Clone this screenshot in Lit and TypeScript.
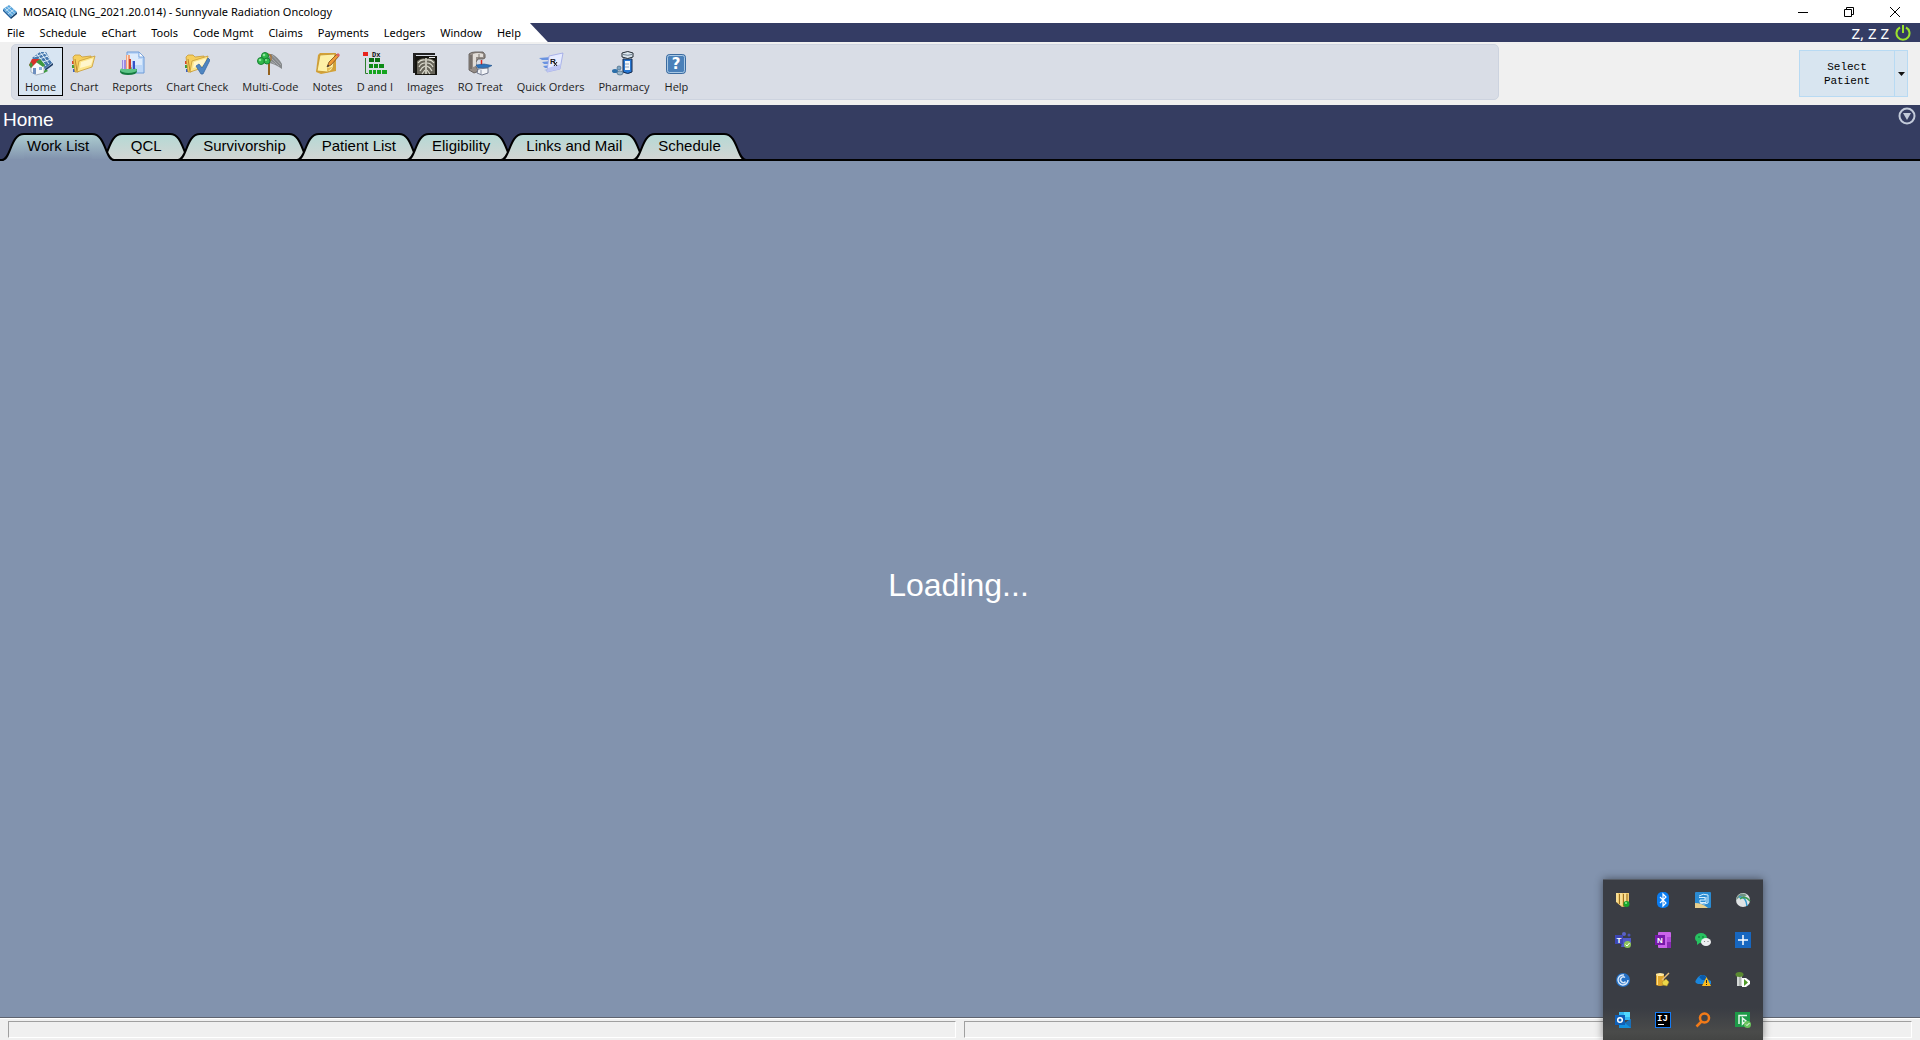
import { LitElement, html, svg, css, SVGTemplateResult } from "lit";
import { customElement, property } from "lit/decorators.js";

const cube = svg`
  <path d="M0 5 L6 1 L14 8 L8 13Z" fill="#5aa5dc"/>
  <path d="M0 5 L8 13 V15 L0 7Z" fill="#1f5f9c"/><path d="M8 13 L14 8 V10 L8 15Z" fill="#163f6b"/>
  <path d="M2 4 L10 11.500 M4 2.500 L12 9.500 M2.500 7 L8 3 M5 10 L11 5.500" stroke="#d4ebfa" stroke-width=".8" fill="none"/>`;

const folder = svg`
  <rect x="1" y="10" width="3" height="3" fill="#d8452c"/><rect x="1" y="14" width="3" height="3" fill="#3a9b3d"/><rect x="2" y="18" width="3" height="3" fill="#3a62c4"/>
  <path d="M2 6 L4 4 L9 4 L11 6 L20 5 L21 9 L7 21 L4 21Z" fill="#f6cf5e" stroke="#c99a35" stroke-width=".8"/>
  <path d="M4 8 L6 20" stroke="#b98a30" stroke-width="1"/>
  <path d="M8 10 L24 5 L21 16 L6 21Z" fill="#fde68c" stroke="#c99a35" stroke-width=".8"/>
  <path d="M10 11 L22 7.500 L20 14 L9 17Z" fill="#fff6cc"/>`;

const icons: Record<string, SVGTemplateResult> = {
  home: svg`
    <path d="M4 7 L12 1 L18 1 L24 12 L17 18Z" fill="#4577ad"/>
    <path d="M9 3 L18 15 M12 1 L21 13 M16 1 L24 11 M6 6 L18 2 M8 9 L20 5 M12 12 L22 8.500" stroke="#dcecf8" stroke-width="1"/>
    <path d="M17 18 L25 12 V14 L17 20Z" fill="#1e3c66"/>
    <path d="M3 15 L8 9 L16 13 V22 L8 24 L3 21Z" fill="#f7f9fb" stroke="#8b98a8" stroke-width=".7"/>
    <path d="M1 14 L4 8 L12 8 L9 11 L3 17Z" fill="#d8322a"/><path d="M1 14 L3 11 L5 14 L3 17Z" fill="#3f9a3f"/>
    <path d="M8 11 L12 8 L17 14 L15 16Z" fill="#3f9a3f"/>
    <rect x="5" y="17" width="3" height="6" fill="#6f90c0"/><rect x="11" y="16" width="3" height="3" fill="#8bb0dd"/>
    <path d="M16 20 q2-3 4 0 l-4 2Z" fill="#3f9a3f"/>`,
  chart: folder,
  reports: svg`
    <path d="M8 1 H20 L25 6 V22 H8Z" fill="#bcd7f8" stroke="#6f9cd8"/><path d="M10 3 H19 V8 H23 V14 H10Z" fill="#dcebfc"/>
    <path d="M20 1 V6 H25Z" fill="#fff" stroke="#6f9cd8" stroke-width=".8"/>
    <path d="M1 19 V21 Q2 24 9 24 Q18 24 18 20 V18Z" fill="#157a40"/><ellipse cx="9.500" cy="19" rx="8.500" ry="3" fill="#5cc486"/>
    <rect x="3" y="9" width="4" height="9" fill="#9c8ae0"/><rect x="4" y="9" width="1" height="9" fill="#d8d0ff"/>
    <rect x="7" y="4" width="4" height="14" fill="#f3a27a"/><rect x="8" y="4" width="1" height="14" fill="#ffe0cc"/><rect x="10" y="8" width="2" height="10" fill="#cf3f2c"/>
    <rect x="13" y="10" width="3" height="8" fill="#3453c8"/><rect x="13" y="10" width="1" height="8" fill="#9fb4f4"/>`,
  check: svg`${folder}<path d="M12 15 L15 13 L18 17 L24 7 L26 9 L19 23 L17 23Z" fill="#4f86c2" stroke="#3a6aa4" stroke-width=".8"/>`,
  multi: svg`
    <path d="M11 3 H15 Q21 6 25 13 V18 Q18 13 12 12Z" fill="#85888b"/><path d="M12 5 L22 15 M15 4 L24 14 M12 9 L18 13" stroke="#b4b7ba" stroke-width=".7" fill="none"/>
    <path d="M12 10 V24" stroke="#94621f" stroke-width="2"/><path d="M10 3 Q15 3 14 8 Q13 11 10 11" stroke="#a9753a" fill="none" stroke-width="1.500"/>
    <circle cx="8" cy="5" r="3.500" fill="#2fb84a" stroke="#178232"/><circle cx="4" cy="10" r="3.500" fill="#2fb84a" stroke="#178232"/><circle cx="10" cy="10" r="3" fill="#2fb84a" stroke="#178232"/>
    <circle cx="7" cy="4" r="1.300" fill="#8ce89a"/><circle cx="3" cy="9" r="1.300" fill="#8ce89a"/><circle cx="9" cy="9" r="1" fill="#8ce89a"/>`,
  notes: svg`
    <path d="M3 4 L5 2 L21 2 L21 20 L6 23 L1 21Z" fill="#d3a137"/>
    <path d="M5 4 L20 3 L18 17 Q16 21 12 21 L2 20Z" fill="#fdf0a6" stroke="#c3922c" stroke-width=".8"/>
    <path d="M18 16 L12 21 L12 17Z" fill="#e3bd55"/>
    <path d="M12 16 L14 11 L22 3 L24 5 L16 14Z" fill="#ef9a35" stroke="#7b4a1c" stroke-width=".8"/>
    <path d="M21 4 L23 2 L25 4 L23.500 6Z" fill="#dc6466"/><path d="M12 16 L13 13.500 L14.500 15Z" fill="#333"/>`,
  dx: svg`
    <rect x="1" y="1" width="5" height="4" fill="#e8221c"/><path d="M3.500 7 V22.500 H6" stroke="#2d7d2d" fill="none"/>
    <rect x="7" y="7" width="5" height="4" fill="#0b6d12"/><rect x="13" y="7" width="5" height="4" fill="#0b6d12"/>
    <rect x="7" y="13" width="4" height="4" fill="#0d8a16"/><rect x="12" y="13" width="4" height="4" fill="#0d8a16"/><rect x="17" y="13" width="5" height="4" fill="#0d8a16"/>
    <rect x="7" y="19" width="3" height="4" fill="#16a51f"/><rect x="11" y="19" width="3" height="4" fill="#16a51f"/><rect x="15" y="19" width="4" height="4" fill="#16a51f"/><rect x="20" y="19" width="5" height="4" fill="#16a51f"/>
    <text x="10" y="6" font-size="7" font-family="Liberation Mono, monospace" font-weight="bold" fill="#111">Dx</text>`,
  images: svg`
    <path d="M1 2 H23 V4 H4 V22 H1Z" fill="#222"/><rect x="3" y="5" width="22" height="19" fill="#15140f"/>
    <path d="M5 10 Q10 6 14 8 Q18 6 23 10 V23 H5Z" fill="#68655a"/>
    <path d="M14 7 V23" stroke="#e6e5d8" stroke-width="1.500"/>
    <path d="M13 9 Q9 8 6 12 M13 12 Q9 12 7 16 M13 15 Q10 16 8 20 M13 19 L10 23 M15 9 Q19 8 22 12 M15 12 Q19 12 21 16 M15 15 Q18 16 20 20 M15 19 L18 23" stroke="#dddccf" stroke-width="1.200" fill="none"/>
    <rect x="17" y="6" width="6" height="1" fill="#eee"/>`,
  treat: svg`
    <path d="M2 3 Q4 1 8 1 L16 1 Q19 3 18 7 L16 8 L11 8 L9 11 V16 L12 20 L7 22 L2 19Z" fill="#958d88" stroke="#57514d" stroke-width=".8"/>
    <path d="M6 3 Q11 1 16 3 V6 H9 V15 L6 16Z" fill="#e2ddd8"/><path d="M4 4 V18" stroke="#6e6763" stroke-width="1.500"/><path d="M12 3 V8" stroke="#7d7671"/>
    <path d="M14.500 9 V14" stroke="#e3261c" stroke-width="1.500"/>
    <path d="M9 14 L17 13 L25 14.500 L21 16.500 L11 17Z" fill="#2e74bd" stroke="#1c4d84" stroke-width=".6"/>
    <path d="M11 18 L21 17 V22 L15 24 L10 22Z" fill="#f2f4f8" stroke="#59627a" stroke-width=".8"/><path d="M14 19 V23" stroke="#8b94a8"/>`,
  orders: svg`
    <path d="M1 7 L13 6 V9 L4 9Z M4 11 L13 10 V13 L6 13Z M5 15 L13 14 V17 L7 17Z M6 19 L13 18 V20Z" fill="#6a93e0"/>
    <path d="M11 5 L25 2 L22 18 L9 21Z" fill="#e6ebff" stroke="#9aa4e4" stroke-width=".8"/><path d="M9 21 L22 18 L23 13 L10 17Z" fill="#bdc5f4"/>
    <text x="12" y="13" font-size="8" font-weight="bold" font-family="Liberation Sans, sans-serif" fill="#16161c">R</text><path d="M16 11 L19 15 M19 11 L16 15" stroke="#16161c" stroke-width="1"/>`,
  pharmacy: svg`
    <path d="M12 8 H21 V21 Q17 24 12 21Z" fill="#2878d4" stroke="#16294a"/><rect x="14" y="10" width="5" height="9" fill="#f3f7fb"/><path d="M14 13 H18 M14 16 H18" stroke="#95a5b8"/>
    <path d="M11 2 Q17 -1 22 2 V6 Q17 9 11 6Z" fill="#dce6ee" stroke="#222b33"/><path d="M12 3.500 Q17 5 21 3.500" stroke="#6c7f90" fill="none"/>
    <ellipse cx="4" cy="20" rx="3" ry="2" fill="#2c6ea8"/><circle cx="8" cy="17" r="2" fill="#7fa6c4" stroke="#375a77" stroke-width=".6"/><ellipse cx="9" cy="22" rx="3" ry="2" fill="#9bb9cf" stroke="#375a77" stroke-width=".6"/>`,
  help: svg`
    <rect x="3.500" y="3.500" width="19" height="19" rx="3" fill="#4a80b9" stroke="#3a6a9f"/><rect x="4.500" y="4.500" width="17" height="17" rx="2" fill="none" stroke="#a9c8e4"/>
    <text x="13" y="18" text-anchor="middle" font-size="15" font-weight="bold" font-family="DejaVu Sans, sans-serif" fill="#fff">?</text>`,
};

const trayIcons: { name: string; art: SVGTemplateResult }[] = [
  { name: "Shield", art: svg`<path d="M1 1 H14 V9 L11 14 L7 15 L1 10Z" fill="#f0cb70"/><path d="M4.500 2 V12 M8.500 2 V14 M12 2 V10" stroke="#9c7020"/><path d="M2 1 V10 M6 1 V13 M10 1 V12" stroke="#fff0b8"/><circle cx="11.500" cy="12" r="3" fill="#18a52c"/><circle cx="11" cy="11" r="1" fill="#8dee94"/>` },
  { name: "Bluetooth", art: svg`<rect x="2" width="12" height="16" rx="5" fill="#0a7cf0"/><path d="M5 5 L11 11 L8 14 V2 L11 5 L5 11" stroke="#fff" fill="none" stroke-width="1.200"/>` },
  { name: "Graphics", art: svg`<rect width="16" height="16" rx="1" fill="#2a8bd2"/><path d="M0 11 Q7 11 13 16 H0Z" fill="#e7cf8d"/><path d="M4 4 Q8 1 13 3 V11 Q9 13 5 11 M4 5.500 H10 V8 H5 V10.500 H11 V5" stroke="#d6efff" fill="none"/>` },
  { name: "Network client", art: svg`<circle cx="8" cy="8" r="7" fill="#dfe3e5"/><path d="M2 5 Q6 -1 12 3 L9 5 Q4 4 1 9Z" fill="#6f9484"/><path d="M4 5 Q11 4 12 14" stroke="#2f9ad0" stroke-width="1.500" fill="none"/><path d="M5 7 Q10 3 15 9" stroke="#3f9c54" stroke-width="1.500" fill="none"/>` },
  { name: "Teams", art: svg`<circle cx="9" cy="2" r="2" fill="#5a62c8"/><circle cx="14" cy="3" r="1.500" fill="#4a52b8"/><path d="M8 6 H16 V11 L11 15 H6Z" fill="#5059c9"/><rect y="3" width="8" height="9" fill="#3d46b4"/><text x="4" y="10.500" text-anchor="middle" font-size="8" font-weight="bold" font-family="Liberation Sans, sans-serif" fill="#fff">T</text><circle cx="12.500" cy="12.500" r="3.500" fill="#8dc35a"/><path d="M10.500 12.500 L12 14 L14.500 11" stroke="#fff" fill="none"/>` },
  { name: "OneNote", art: svg`<rect x="3" width="13" height="16" rx="1" fill="#ca64ea"/><path d="M12 5 H16 V10 H12Z" fill="#ae4bd5"/><path d="M12 10 H16 V16 H12Z" fill="#8a2bb5"/><rect y="3" width="10" height="10" fill="#7719aa"/><text x="5" y="11" text-anchor="middle" font-size="8" font-weight="bold" font-family="Liberation Sans, sans-serif" fill="#fff">N</text>` },
  { name: "WeChat", art: svg`<ellipse cx="6" cy="6" rx="6" ry="5" fill="#27c160"/><path d="M2 9 L2 13 L6 10Z" fill="#27c160"/><circle cx="4" cy="5" r=".8" fill="#0a6a30"/><circle cx="8" cy="5" r=".8" fill="#0a6a30"/><ellipse cx="11" cy="10" rx="5" ry="4" fill="#eceef0"/><circle cx="9.500" cy="9.500" r=".6" fill="#777"/><circle cx="13" cy="9.500" r=".6" fill="#777"/>` },
  { name: "Add", art: svg`<rect width="16" height="16" fill="#1767c0"/><path d="M8 3 V13 M3 8 H13" stroke="#fff" stroke-width="1.500"/>` },
  { name: "Receiver", art: svg`<circle cx="8" cy="8" r="7" fill="#2470c4"/><path d="M9 3 A5 5 0 1 0 13 8 M10 5.500 A2.800 2.800 0 1 0 10.500 9.500" stroke="#d8e8fa" fill="none" stroke-width="1.500"/>` },
  { name: "Database", art: svg`<path d="M1 2 V13 Q5 15 9 13 V2Z" fill="#e0a62c"/><ellipse cx="5" cy="2.500" rx="4" ry="1.500" fill="#ffe9a0"/><path d="M2.500 4 V13" stroke="#ffe08a"/><path d="M7 8 L14 1" stroke="#e9c07a" stroke-width="1.500"/><path d="M7 10 L11 7 L14 10 L12 14 L8 13Z" fill="#ecd74a" stroke="#a78a1c" stroke-width=".5"/>` },
  { name: "OneDrive", art: svg`<path d="M3 12 Q-1 11 1 8 Q4 3 7 3 Q12 3 12 7 L16 9 V12 H4Z" fill="#1a86dc"/><path d="M4 5 Q8 1 11 5 L13 8 L7 8Z" fill="#0a5aa8"/><path d="M11.500 5 L16 14 H7Z" fill="#fbbc1d"/><path d="M11.500 8 V11 M11.500 12 V13" stroke="#222"/>` },
  { name: "Service monitor", art: svg`<path d="M2 3 H7 V14 H2Z" fill="#d4d8d6"/><path d="M5 4 V14" stroke="#8d9290"/><ellipse cx="4.500" cy="2.500" rx="4" ry="2.500" fill="#5b8a32"/><path d="M7 6 H11 L15 9 V12 L11 15 H7Z" fill="#fff"/><path d="M9 7 L13 10.500 L9 14Z" fill="#4e9a28"/>` },
  { name: "Outlook", art: svg`<path d="M4 0 H15 V8 H4Z" fill="#35b8f1"/><path d="M9 0 H15 V5 H9Z" fill="#50d9ff"/><path d="M4 7 L10 11 L16 7 V16 H4Z" fill="#1490df"/><path d="M10 11 L16 16 V7Z" fill="#1a6fb8"/><rect y="3" width="10" height="10" fill="#0f5fb8"/><circle cx="5" cy="8" r="2.300" stroke="#fff" stroke-width="1.500" fill="none"/>` },
  { name: "IntelliJ IDEA", art: svg`<rect x=".5" y=".5" width="15" height="15" fill="#000" stroke="#147bf5"/><text x="2" y="9" font-size="9" font-weight="bold" font-family="Liberation Mono, monospace" fill="#fff">IJ</text><path d="M3 12.500 H9" stroke="#fff"/>` },
  { name: "Search", art: svg`<circle cx="9.500" cy="6" r="4.500" stroke="#f27a18" stroke-width="2.500" fill="none"/><path d="M6.500 9.500 L1.500 14.500" stroke="#f27a18" stroke-width="2.500"/>` },
  { name: "Protected", art: svg`<rect width="15" height="15" fill="#1e9a48"/><path d="M4 12 V3.500 H12 M7.500 6 L11 9 L7.500 12Z" stroke="#e8f6ec" stroke-width="1.500" fill="none"/><circle cx="12.500" cy="12.500" r="3.500" fill="#69c25c"/><path d="M11 12.500 L12 13.500 L14.500 11" stroke="#fff" fill="none"/>` },
];

@customElement("folder-tab")
export class FolderTab extends LitElement {
  @property() label = "";
  @property({ type: Boolean, reflect: true }) active = false;

  static styles = css`
    :host { display: block; position: relative; margin-right: -14px; }
    :host([active]) { z-index: 1; }
    .tab {
      display: flex; align-items: stretch; height: 28px; padding: 0; border: 0; background: none;
      font: 15px/18px "Liberation Sans", Arial, sans-serif; color: #000;
    }
    .cap { display: block; width: 22px; height: 28px; flex: none; }
    .mid {
      box-sizing: border-box; min-width: 48px; padding: 2px 3px 0; text-align: center; white-space: nowrap;
      border-top: 2px solid #000; border-bottom: 2px solid #000;
      background: linear-gradient(#b5d9d5, #d3d5d3);
    }
    :host([active]) .mid { border-bottom-color: #8293ae; background: linear-gradient(#accdd0, #8293ae); }
  `;

  private cap(right: boolean) {
    const from = this.active ? "#accdd0" : "#b5d9d5";
    const to = this.active ? "#8293ae" : "#d3d5d3";
    return html`<svg class="cap" viewBox="0 0 22 28" aria-hidden="true">
      <defs><linearGradient id="g" x1="0" y1="0" x2="0" y2="1"><stop offset="0" stop-color=${from}/><stop offset="1" stop-color=${to}/></linearGradient></defs>
      <g transform=${right ? "translate(22 0) scale(-1 1)" : ""}>
        <path d="M0 27 C9 27 8 1 22 1 V27Z" fill="url(#g)"/>
        ${this.active ? svg`<path d="M3 26 H22 V28 H1Z" fill="#8293ae"/>` : svg`<path d="M0 27 H22" stroke="#000" stroke-width="2"/>`}
        <path d="M0 27 C9 27 8 1 22 1" fill="none" stroke="#000" stroke-width="2"/>
      </g></svg>`;
  }

  render() {
    return html`<button class="tab" role="tab" aria-selected=${this.active ? "true" : "false"}>
      ${this.cap(false)}<span class="mid">${this.label}</span>${this.cap(true)}
    </button>`;
  }
}

@customElement("app-root")
export class AppRoot extends LitElement {
  private menus = ["File", "Schedule", "eChart", "Tools", "Code Mgmt", "Claims", "Payments", "Ledgers", "Window", "Help"];
  private tools: [string, string][] = [
    ["home", "Home"], ["chart", "Chart"], ["reports", "Reports"], ["check", "Chart Check"], ["multi", "Multi-Code"],
    ["notes", "Notes"], ["dx", "D and I"], ["images", "Images"], ["treat", "RO Treat"], ["orders", "Quick Orders"],
    ["pharmacy", "Pharmacy"], ["help", "Help"],
  ];
  private tabs = ["Work List", "QCL", "Survivorship", "Patient List", "Eligibility", "Links and Mail", "Schedule"];

  static styles = css`
    :host {
      display: flex; flex-direction: column; min-height: 100vh; position: relative; overflow: hidden;
      background: #f0f0f0; color: #000; font: 11px/16px "Noto Sans", "Open Sans", sans-serif;
    }
    button { font: inherit; color: inherit; margin: 0; }
    svg { display: block; }
    .title { display: flex; align-items: center; height: 23px; padding: 0 2px 0 3px; background: #fff; }
    .title-text { margin: 0 auto 0 6px; font: inherit; }
    .win { width: 46px; height: 23px; padding: 0; border: 0; background: none; display: grid; place-items: center; }
    .menubar { display: flex; height: 19px; background: #343c64; }
    .menus { display: flex; gap: 1px; background: #fff; padding-right: 20px; clip-path: polygon(0 0, calc(100% - 18px) 0, 100% 100%, 0 100%); }
    .menu { border: 0; background: none; padding: 0 7px; line-height: 18px; }
    .user { display: flex; align-items: center; gap: 6px; margin-left: auto; padding-right: 9px; color: #fff; font-size: 15px; }
    .power { padding: 0; border: 0; background: none; }
    .tools { display: flex; align-items: flex-start; padding: 2px 0 5px; }
    .panel {
      box-sizing: border-box; display: flex; align-items: flex-start; flex: 0 1 1488px; height: 56px; margin: 0 auto 0 11px; padding: 2px 6px;
      background: #d9dde6; border: 1px solid #cdd3df; border-radius: 5px;
    }
    .tool {
      box-sizing: border-box; display: flex; flex-direction: column; align-items: center; gap: 3px; height: 49px; padding: 3px 6px 0;
      border: 1px solid transparent; background: none; font-family: "Open Sans", "Noto Sans", sans-serif; white-space: nowrap; color: #1c1c1c;
    }
    .tool.on { border-color: #000; background: #d8e5f2; }
    .select { display: flex; height: 47px; margin: 6px 12px 0 0; }
    .pick, .drop { border: 1px solid #b8daf3; background: #d8e5f0; padding: 0; }
    .pick { width: 96px; font: 11px/14px "Liberation Mono", "Courier New", monospace; }
    .drop { width: 13px; border-left: 0; display: grid; place-items: center; }
    .head { background: #353d61; color: #fff; }
    .crumb { display: flex; align-items: flex-start; justify-content: space-between; padding: 2px 4px 0 3px; }
    .name { margin: 0; font: 19px/26px "Liberation Sans", Arial, sans-serif; }
    .round { padding: 0; border: 0; background: none; }
    .tabs { display: flex; height: 28px; padding-left: 2px; box-shadow: inset 0 -2px #000; }
    .body {
      flex: 1; display: grid; place-items: center; padding: 0 3px 8px 0; background: #8293ae;
      color: #fff; font: 32px/38px "Liberation Sans", Arial, sans-serif;
    }
    .status { display: flex; gap: 8px; padding: 3px 8px 2px; height: 17px; border-top: 1px solid #5f6470; box-shadow: inset 0 1px #fff; }
    .cell { flex: 1; border: 1px solid #fff; border-top-color: #a0a0a0; border-left-color: #a0a0a0; }
    .tray {
      position: absolute; right: 157px; bottom: 0; display: grid; grid-template-columns: repeat(4, 40px); grid-auto-rows: 40px;
      background: linear-gradient(#3a3d44 80%, #4a4b4a 95%, #444544); border-top: 1px solid #565c66; box-shadow: 0 0 8px rgba(0, 0, 0, 0.45);
    }
    .app { padding: 0; border: 0; background: none; display: grid; place-items: center; }
  `;

  render() {
    return html`
      <header class="title">
        <svg width="14" height="16" viewBox="0 0 14 16" aria-hidden="true">${cube}</svg>
        <h1 class="title-text">MOSAIQ (LNG_2021.20.014) - Sunnyvale Radiation Oncology</h1>
        <button class="win" aria-label="Minimize"><svg width="10" height="10"><path d="M0 5.500H10" stroke="#000"/></svg></button>
        <button class="win" aria-label="Restore"><svg width="10" height="10"><path d="M.5 2.500H7.500V9.500H.5Z M2.500 2.500V.5H9.500V7.500H7.500" stroke="#000" fill="none"/></svg></button>
        <button class="win" aria-label="Close"><svg width="10" height="10"><path d="M0 0L10 10M10 0L0 10" stroke="#000"/></svg></button>
      </header>
      <nav class="menubar" aria-label="Main menu">
        <div class="menus">${this.menus.map((m) => html`<button class="menu">${m}</button>`)}</div>
        <div class="user"><span>Z, Z Z</span>
          <button class="power" aria-label="Log off"><svg width="16" height="17" viewBox="0 0 16 17"><path d="M5 3.500A6.500 6.500 0 1 0 11 3.500M8 1V9" stroke="#9be22d" stroke-width="2" fill="none"/></svg></button>
        </div>
      </nav>
      <div class="tools">
        <div class="panel" role="toolbar">
          ${this.tools.map(([id, label]) => html`<button class="tool ${id === "home" ? "on" : ""}"><svg width="26" height="25" viewBox="0 0 26 25" aria-hidden="true">${icons[id]}</svg><span>${label}</span></button>`)}
        </div>
        <div class="select">
          <button class="pick">Select<br />Patient</button>
          <button class="drop" aria-label="Patient list"><svg width="7" height="4"><path d="M0 0H7L3.500 4Z" fill="#111"/></svg></button>
        </div>
      </div>
      <section class="head">
        <div class="crumb">
          <h2 class="name">Home</h2>
          <button class="round" aria-label="Collapse"><svg width="18" height="18" viewBox="0 0 18 18"><circle cx="9" cy="9" r="7.500" fill="none" stroke="#c3cbda" stroke-width="2"/><path d="M5 6H13L9 13Z" fill="#c3cbda"/></svg></button>
        </div>
        <div class="tabs" role="tablist">
          ${this.tabs.map((t, i) => html`<folder-tab label=${t} ?active=${i === 0}></folder-tab>`)}
        </div>
      </section>
      <main class="body">Loading...</main>
      <footer class="status"><div class="cell"></div><div class="cell"></div></footer>
      <aside class="tray" aria-label="Notification area">
        ${trayIcons.map((t) => html`<button class="app" aria-label=${t.name}><svg width="16" height="16" viewBox="0 0 16 16">${t.art}</svg></button>`)}
      </aside>
    `;
  }
}
